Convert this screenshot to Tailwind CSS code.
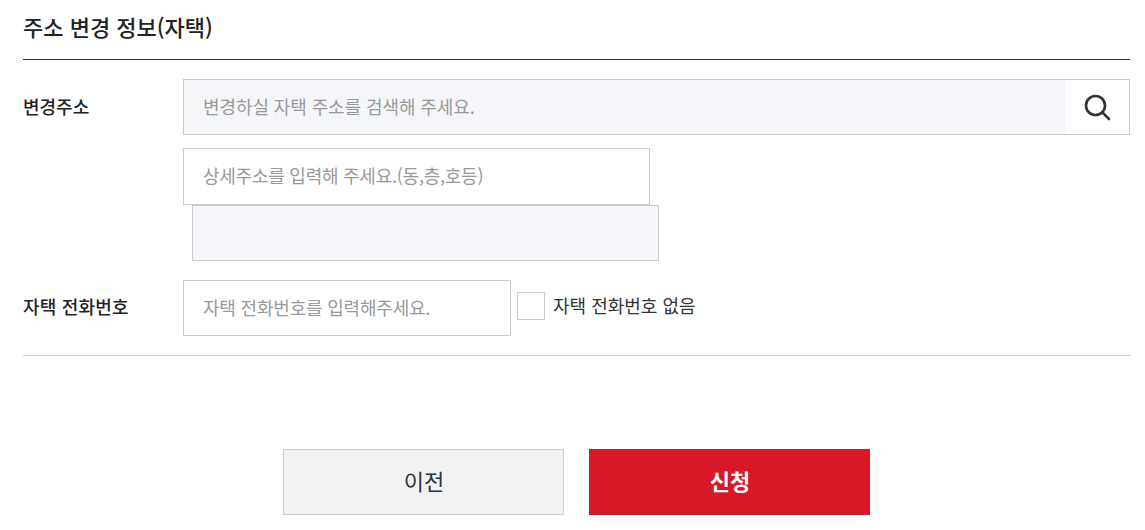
<!DOCTYPE html>
<html lang="ko">
<head>
  <meta charset="UTF-8" />
  <title>주소 변경 정보</title>
  <script src="https://cdn.jsdelivr.net/npm/@tailwindcss/browser@4"></script>
</head>
<body class="bg-white font-['Noto_Sans_CJK_KR','Noto_Sans',sans-serif] text-[#222] overflow-hidden">
  <div class="h-[530px] w-[1145px] pl-[23px] pr-[15px]">

    <!-- Title -->
    <h2 class="h-[60px] border-b border-[#333] pt-[10px] text-[22px] leading-[32px] font-medium">주소 변경 정보(자택)</h2>

    <!-- Address -->
    <div class="flex pt-[19px]">
      <div class="w-[160px] shrink-0 text-[18px] leading-[55px] font-medium">변경주소</div>
      <div class="flex-1">
        <div class="flex h-[56px] border border-[#ccc]">
          <div class="flex-1 bg-[#f5f6fa] pl-[19px] text-[18px] leading-[53px] tracking-[-0.1px] text-[#999]">변경하실 자택 주소를 검색해 주세요.</div>
          <div class="flex w-[64px] items-center justify-center">
            <svg class="ml-[-1px]" width="28" height="28" viewBox="0 0 28 28" fill="none" stroke="#333" stroke-width="2.6" stroke-linecap="round">
              <circle cx="12.5" cy="12.5" r="9.5" />
              <path d="M19.5 19.5L26 26" />
            </svg>
          </div>
        </div>
        <div class="mt-[13px] h-[57px] w-[467px] border border-[#ccc] pl-[19px] text-[18px] leading-[53px] tracking-[-0.25px] text-[#999]">상세주소를 입력해 주세요.(동,층,호등)</div>
        <div class="ml-[9px] h-[56px] w-[467px] border border-[#ccc] bg-[#f5f6fa]"></div>
      </div>
    </div>

    <!-- Home phone -->
    <div class="mt-[19px] flex h-[76px] border-b border-[#ccc]">
      <div class="w-[160px] shrink-0 text-[18px] leading-[53px] font-medium tracking-[0.2px]">자택 전화번호</div>
      <div class="h-[56px] w-[328px] border border-[#ccc] pl-[19px] text-[18px] leading-[53px] tracking-[-0.2px] text-[#999]">자택 전화번호를 입력해주세요.</div>
      <div class="ml-[6px] mt-[12px] h-[28px] w-[28px] border border-[#ccc]"></div>
      <div class="ml-[8px] text-[18px] leading-[51px] text-[#333]">자택 전화번호 없음</div>
    </div>

    <!-- Buttons -->
    <div class="mt-[93px] ml-[260px] flex gap-[25px]">
      <button class="h-[66px] w-[281px] border border-[#ccc] bg-[#f1f2f4] pb-[3px] pl-[1px] text-[22px] text-[#333]">이전</button>
      <button class="h-[66px] w-[281px] bg-[#d61827] pb-[3px] pl-[1px] text-[22px] font-bold text-white">신청</button>
    </div>
  </div>
</body>
</html>
